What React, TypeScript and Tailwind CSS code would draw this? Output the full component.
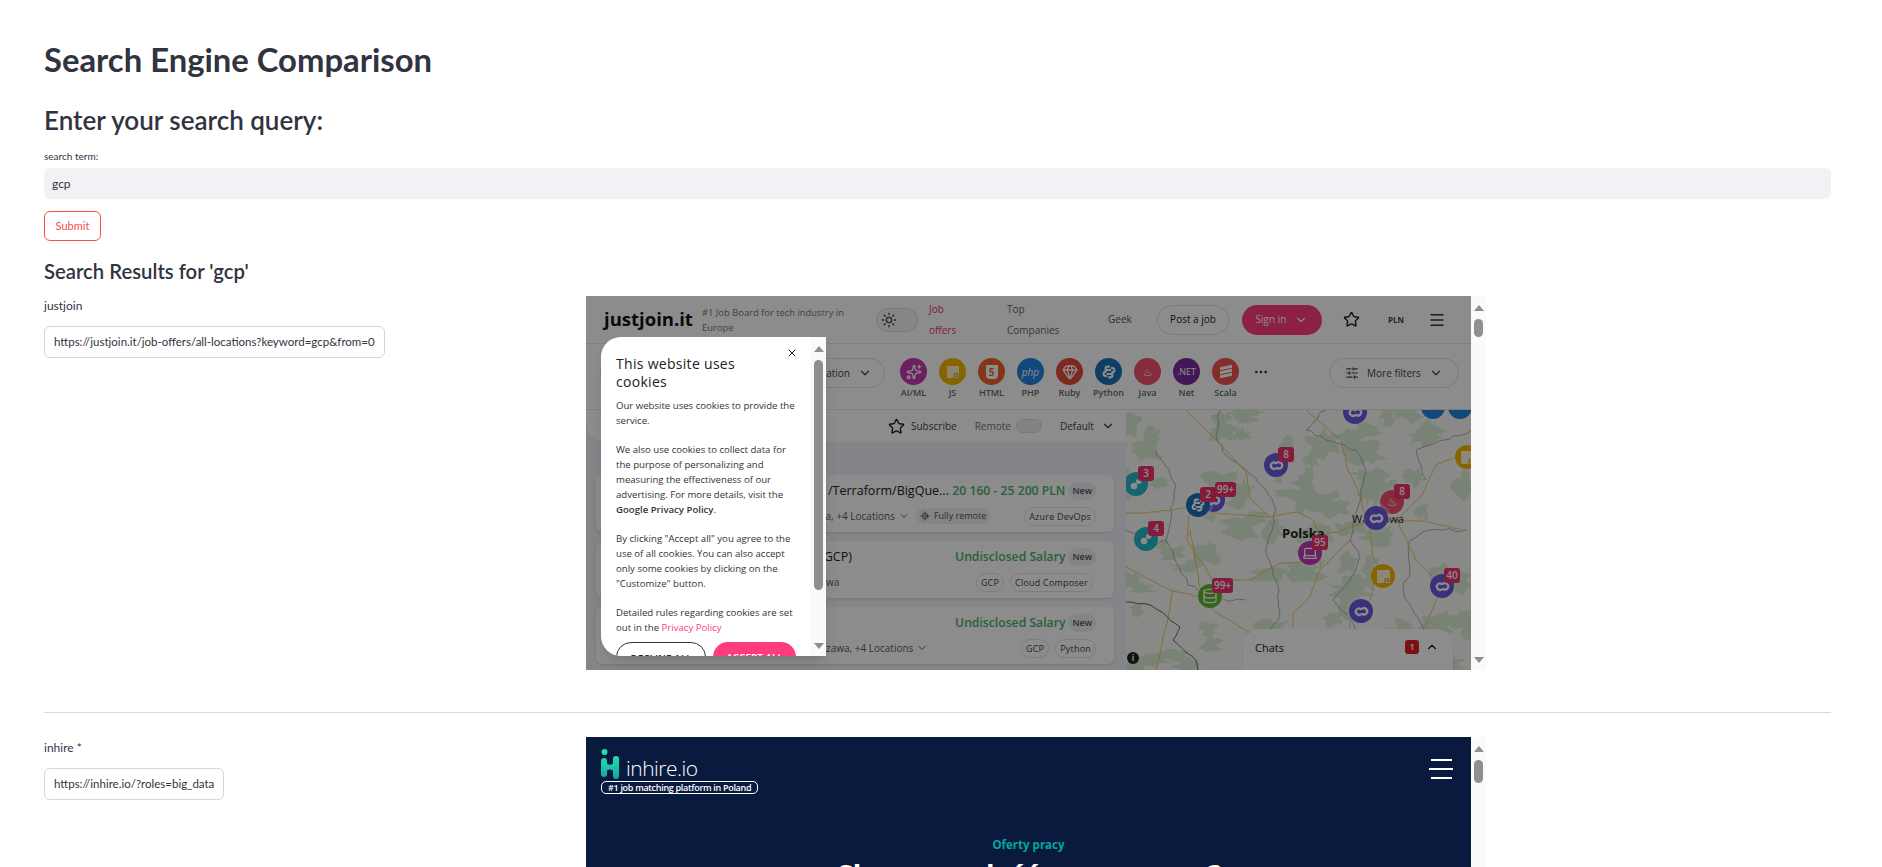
import { ChevronDown, ChevronUp, Database, Ellipsis, Gem, Laptop, LocateFixed, Menu, SlidersHorizontal, Sparkles, Star, Sun, X } from "lucide-react";
import type { ReactNode } from "react";

const TECH: { label: string; bg: string; icon: ReactNode }[] = [
  { label: "AI/ML", bg: "bg-[#c23bb4]", icon: <Sparkles className="h-4 w-4 text-white" /> },
  { label: "JS", bg: "bg-[#f5b800]", icon: <span className="flex h-3 w-3 items-end justify-end bg-[#fff2c0] text-[6px] font-bold leading-none text-[#c59400]">JS</span> },
  { label: "HTML", bg: "bg-[#f0652a]", icon: <span className="flex h-[14px] w-3 items-center justify-center rounded-b-[4px] bg-white text-[10px] font-bold leading-none text-[#f0652a]">5</span> },
  { label: "PHP", bg: "bg-[#2383e2]", icon: <span className="text-[10px] italic leading-none text-white">php</span> },
  { label: "Ruby", bg: "bg-[#e84a3a]", icon: <Gem className="h-4 w-4 text-white" /> },
  { label: "Python", bg: "bg-[#1d6fbb]", icon: <PythonIcon /> },
  { label: "Java", bg: "bg-[#f0506e]", icon: <span className="text-[11px] leading-none text-white">♨</span> },
  { label: "Net", bg: "bg-[#7b2d9f]", icon: <span className="text-[9px] leading-none text-white">.NET</span> },
  { label: "Scala", bg: "bg-[#f0544f]", icon: <span className="flex -skew-y-12 flex-col gap-[1px]"><span className="block h-[3px] w-3 bg-white" /><span className="block h-[3px] w-3 bg-white" /><span className="block h-[3px] w-3 bg-white" /></span> },
];

type Pin = { x: number; y: number; color: string; kind: string; badge?: string };

// page coordinates minus the map's corner (1126, 410)
const PINS: Pin[] = [
  { x: 10, y: 74, color: "#27b9c9", kind: "gear", badge: "3" },
  { x: 20, y: 129, color: "#27b9c9", kind: "gear", badge: "4" },
  { x: 87, y: 90, color: "#6a5ae0", kind: "loop", badge: "99+" },
  { x: 72, y: 95, color: "#1d6fbb", kind: "python", badge: "2" },
  { x: 150, y: 55, color: "#6a5ae0", kind: "loop", badge: "8" },
  { x: 229, y: 2, color: "#6a5ae0", kind: "loop" },
  { x: 307, y: -3, color: "#2383e2", kind: "none" },
  { x: 334, y: -3, color: "#2383e2", kind: "none" },
  { x: 341, y: 47, color: "#f5b800", kind: "js" },
  { x: 184, y: 143, color: "#c23bb4", kind: "laptop", badge: "95" },
  { x: 266, y: 92, color: "#f0506e", kind: "java", badge: "8" },
  { x: 250, y: 108, color: "#6a5ae0", kind: "loop" },
  { x: 257, y: 166, color: "#f5b800", kind: "js" },
  { x: 316, y: 176, color: "#6a5ae0", kind: "loop", badge: "40" },
  { x: 235, y: 201, color: "#6a5ae0", kind: "loop" },
  { x: 84, y: 186, color: "#5fb82e", kind: "db", badge: "99+" },
];

const ROADS = [
  [[87, 103], [144, 107], [171, 102], [187, 110], [194, 125], [217, 120], [237, 113], [271, 110], [302, 112], [337, 120]],
  [[244, 123], [247, 147], [252, 157], [244, 190], [224, 213], [218, 260]],
  [[194, 160], [224, 130]],
  [[194, 125], [194, 160], [184, 187], [167, 203], [167, 217]],
  [[64, 100], [61, 130], [74, 150], [87, 170], [124, 170], [154, 153], [184, 153]],
  [[87, 200], [124, 223], [144, 233]],
  [[0, 103], [20, 103], [60, 98], [87, 103]],
  [[64, 120], [74, 177], [87, 200]],
  [[0, 157], [44, 180], [74, 187]],
  [[47, 180], [40, 217], [30, 260]],
  [[180, 0], [215, 30], [222, 60], [232, 80], [244, 123]],
  [[271, 110], [290, 150], [316, 176]],
  [[316, 176], [300, 215], [296, 240]],
  [[60, 0], [90, 30], [120, 62], [124, 88], [144, 107]],
  [[345, 40], [310, 55], [296, 85], [271, 110]],
];

const BORDERS = [
  [[94, 0], [90, 25], [100, 45], [120, 60], [140, 80], [150, 100], [140, 143], [150, 170], [154, 203], [140, 230]],
  [[200, 0], [180, 20], [200, 30], [230, 40], [240, 60], [235, 85], [224, 130], [234, 147], [224, 170], [207, 190], [227, 213], [235, 250]],
  [[300, 70], [290, 40], [345, 20]],
  [[284, 130], [304, 120], [340, 120]],
  [[284, 130], [284, 160], [277, 180], [297, 217], [300, 260]],
  [[30, 40], [50, 75], [40, 130], [62, 175], [90, 190], [120, 190]],
  [[0, 120], [30, 135], [40, 130]],
];

// fixed seed, so the map comes out the same on every load
function makeRandom(seed: number) {
  let value = seed;
  return () => {
    value = (value * 16807) % 2147483647;
    return value / 2147483647;
  };
}

function wiggle(points: number[][], amp: number, seed: number) {
  const random = makeRandom(seed);
  let d = `M${points[0][0]} ${points[0][1]}`;
  for (let i = 1; i < points.length; i++) {
    const [x0, y0] = points[i - 1];
    const [x1, y1] = points[i];
    const steps = Math.max(1, Math.round(Math.hypot(x1 - x0, y1 - y0) / 6));
    for (let s = 1; s <= steps; s++) {
      const t = s / steps;
      const ox = s === steps ? 0 : (random() - 0.5) * amp;
      const oy = s === steps ? 0 : (random() - 0.5) * amp;
      d += `L${(x0 + (x1 - x0) * t + ox).toFixed(1)} ${(y0 + (y1 - y0) * t + oy).toFixed(1)}`;
    }
  }
  return d;
}

function blob(cx: number, cy: number, rx: number, ry: number, seed: number) {
  const random = makeRandom(seed);
  let d = "";
  const count = 16;
  for (let i = 0; i < count; i++) {
    const angle = (i / count) * Math.PI * 2;
    const r = 0.45 + random() * 0.75;
    d += `${i === 0 ? "M" : "L"}${(cx + Math.cos(angle) * rx * r).toFixed(1)} ${(cy + Math.sin(angle) * ry * r).toFixed(1)}`;
  }
  return d + "Z";
}

const GREEN = (() => {
  const random = makeRandom(4242);
  const shapes: string[] = [];
  for (let i = 0; i < 90; i++) {
    const x = random() * 345;
    const y = random() * 260;
    shapes.push(blob(x, y, 7 + random() * 17, 5 + random() * 11, 100 + i * 37));
  }
  return shapes;
})();

function PythonIcon() {
  return (
    <svg viewBox="0 0 24 24" className="h-4 w-4" fill="none" stroke="white" strokeWidth="3.2" strokeLinecap="round">
      <path d="M12 4H9a2 2 0 0 0-2 2v3h7M7 12H6a2 2 0 0 0-2 2v1a3 3 0 0 0 3 3h1" />
      <path d="M12 20h3a2 2 0 0 0 2-2v-3h-7M17 12h1a2 2 0 0 0 2-2V9a3 3 0 0 0-3-3h-1" />
    </svg>
  );
}

function PinIcon({ kind }: { kind: string }) {
  if (kind === "loop")
    return (
      <svg viewBox="0 0 24 24" className="h-[17px] w-[17px]" fill="none" stroke="white" strokeWidth="3.2" strokeLinecap="round">
        <path d="M11 8.500A4.500 4.500 0 1 0 11 16" />
        <path d="M13 8a4.500 4.500 0 1 1 0 7.500" />
      </svg>
    );
  if (kind === "gear")
    return (
      <svg viewBox="0 0 24 24" className="h-4 w-4" fill="white">
        <circle cx="9" cy="15" r="5" />
        <circle cx="16" cy="8" r="4" />
      </svg>
    );
  if (kind === "python") return <PythonIcon />;
  if (kind === "laptop") return <Laptop className="h-4 w-4 text-white" />;
  if (kind === "db") return <Database className="h-4 w-4 text-white" />;
  if (kind === "java") return <span className="text-[12px] leading-none text-white">♨</span>;
  if (kind === "js")
    return <span className="flex h-[13px] w-[13px] items-end justify-end bg-[#fff6d8] text-[6px] font-bold leading-none text-[#c59400]">JS</span>;
  return null;
}

function MapPin({ pin }: { pin: Pin }) {
  return (
    <div className="absolute h-0 w-0" style={{ left: pin.x, top: pin.y }}>
      <div
        className="absolute -left-3 -top-3 flex h-6 w-6 items-center justify-center rounded-full ring-[3px] ring-white/30"
        style={{ backgroundColor: pin.color }}
      >
        <PinIcon kind={pin.kind} />
      </div>
      {pin.badge && (
        <span className="absolute left-[2px] top-[-18px] h-[15px] min-w-[16px] rounded-[3px] bg-[#f0326f] px-[2px] text-center text-[10px] font-semibold leading-[15px] text-white">
          {pin.badge}
        </span>
      )}
    </div>
  );
}

function MapBackground() {
  return (
    <svg viewBox="0 0 345 260" className="block h-full w-full" fill="none">
      <g fill="#dcefd6">
        {GREEN.map((d) => (
          <path key={d} d={d} />
        ))}
      </g>
      <g stroke="#8f8f9c" strokeWidth="0.7">
        {BORDERS.map((line, i) => (
          <path key={i} d={wiggle(line, 3.5, 50 + i * 11)} />
        ))}
      </g>
      <g stroke="#efc663" strokeWidth="1">
        {ROADS.map((line, i) => (
          <path key={i} d={wiggle(line, 1, 900 + i * 13)} />
        ))}
      </g>
      <path d={wiggle([[0, 192], [26, 196], [54, 217], [47, 230], [70, 250], [72, 260]], 3, 777)} stroke="#55555f" strokeWidth="0.9" />
    </svg>
  );
}

function Pill({ children, className = "" }: { children: ReactNode; className?: string }) {
  return <span className={`whitespace-nowrap rounded-full border border-[#e4e4e8] px-[4px] py-[3px] text-[9px] font-medium leading-[11px] tracking-[0.2px] text-[#37474f] ${className}`}>{children}</span>;
}

function JobCard({ title, salary, location, tags, indent }: { title: string; salary: string; location: string; tags: ReactNode; indent: string }) {
  return (
    <div className="flex h-[57px] flex-col justify-center gap-[7px] rounded-md bg-white pr-[18px] shadow-sm">
      <div className={`flex items-center justify-end gap-[3px] ${indent}`}>
        <span className="mr-auto whitespace-nowrap text-[12.5px] font-medium leading-[18px] text-[#222]">{title}</span>
        <span className="whitespace-nowrap text-[12.2px] font-semibold leading-[18px] text-[#4caf6e]">{salary}</span>
        <span className="rounded-full bg-[#eef0f3] px-[4px] py-[3px] text-[9px] font-semibold leading-[12px] text-[#4a5560]">New</span>
      </div>
      <div className="flex items-center justify-end gap-[6px] pl-[230px]">
        <span className="mr-auto flex items-center gap-[3px] whitespace-nowrap text-[10px] leading-[14px] text-[#555e68]">
          {location}
          {location.includes("Locations") && <ChevronDown className="h-3 w-3" />}
        </span>
        {tags}
      </div>
    </div>
  );
}

function JustJoinFrame() {
  return (
    <div className="relative flex h-full w-[885px] shrink-0 flex-col overflow-hidden bg-white">
      <header className="flex h-[48px] shrink-0 items-center border-b border-[#e8e8ea] pl-[18px]">
        <span className="w-[98px] text-[18.500px] font-bold leading-none text-[#111]">justjoin.it</span>
        <span className="w-[174px] text-[9.4px] leading-[15px] text-[#777]">#1 Job Board for tech industry in<br />Europe</span>
        <span className="flex h-6 w-[42px] items-center rounded-full border border-[#ddd] bg-[#f5f5f7] pl-1">
          <Sun className="h-4 w-4 text-[#444]" />
        </span>
        <span className="ml-[11px] w-[78px] text-[10px] font-medium leading-[21px] text-[#f0326f]">Job<br />offers</span>
        <span className="w-[101px] text-[10px] leading-[21px] text-[#666]">Top<br />Companies</span>
        <span className="w-[49px] text-[10px] text-[#555]">Geek</span>
        <span className="flex h-[30px] w-[72px] items-center justify-center rounded-full border border-[#e0e0e0] text-[10px] font-medium text-[#222]">Post a job</span>
        <span className="ml-[13px] flex h-[30px] w-[80px] items-center justify-center gap-2 rounded-full bg-[#ff3b7f] text-[10px] font-medium text-white">
          Sign in <ChevronDown className="h-3.5 w-3.5" />
        </span>
        <Star className="ml-[21px] h-[17px] w-[17px] text-[#222]" />
        <span className="ml-[28px] text-[8px] font-bold text-[#444]">PLN</span>
        <Menu className="ml-[24px] h-[18px] w-[18px] text-[#333]" />
      </header>

      <div className="flex h-[66px] shrink-0 items-start border-b border-[#e8e8ea] pl-[14px] pt-[14px]">
        <span className="flex h-[30px] w-[285px] items-center justify-end gap-2 rounded-full border border-[#e0e0e0] pr-3 text-[10px] font-medium text-[#37474f]">
          Location <ChevronDown className="h-3.5 w-3.5" />
        </span>
        <div className="ml-[9px] flex">
          {TECH.map((tech) => (
            <div key={tech.label} className="flex w-[39px] flex-col items-center gap-[2px]">
              <span className={`flex h-[27px] w-[27px] items-center justify-center rounded-full ${tech.bg}`}>{tech.icon}</span>
              <span className="text-[9px] font-semibold leading-[12px] text-[#666]">{tech.label}</span>
            </div>
          ))}
        </div>
        <Ellipsis className="ml-[8px] mt-[6px] h-[16px] w-[16px] text-[#333]" />
        <span className="ml-[60px] flex h-[30px] w-[130px] items-center justify-center gap-2 rounded-full border border-[#e0e0e0] text-[10px] font-medium text-[#37474f]">
          <SlidersHorizontal className="h-3.5 w-3.5" /> More filters <ChevronDown className="h-3.5 w-3.5" />
        </span>
      </div>

      <div className="flex min-h-0 flex-1">
        <div className="flex w-[540px] shrink-0 flex-col bg-[#f1f3f7]">
          <div className="flex h-[32px] shrink-0 items-center rounded-bl-[20px] bg-white pl-[302px] text-[10px] font-medium text-[#555]">
            <Star className="h-[17px] w-[17px] text-[#222]" />
            <span className="ml-[6px] text-[#37474f]">Subscribe</span>
            <span className="ml-[18px] text-[#777]">Remote</span>
            <span className="ml-[5px] h-[14px] w-[26px] rounded-full border border-[#ddd] bg-[#eee]" />
            <span className="ml-[18px] text-[#37474f]">Default</span>
            <ChevronDown className="ml-[7px] h-3.5 w-3.5 text-[#333]" />
          </div>
          <div className="flex flex-col gap-[9px] pl-[10px] pr-[12px] pt-[33px]">
            <JobCard
              title="/Terraform/BigQue..."
              salary="20 160 - 25 200 PLN"
              location="wa, +4 Locations"
              indent="pl-[232px]"
              tags={
                <>
                  <span className="mr-[28px] flex items-center gap-1 whitespace-nowrap rounded-full bg-[#eef0f3] px-[4px] py-[2px] text-[9px] font-medium leading-[12px] text-[#555]"><LocateFixed className="h-2.5 w-2.5" />Fully remote</span>
                  <Pill>Azure DevOps</Pill>
                </>
              }
            />
            <JobCard
              title="(GCP)"
              salary="Undisclosed Salary"
              location="wa"
              indent="pl-[224px]"
              tags={<><Pill>GCP</Pill><Pill className="mr-[3px]">Cloud Composer</Pill></>}
            />
            <JobCard
              title=""
              salary="Undisclosed Salary"
              location="zawa, +4 Locations"
              indent="pl-[230px]"
              tags={<><Pill>GCP</Pill><Pill>Python</Pill></>}
            />
          </div>
        </div>
        <div className="relative min-w-0 flex-1 overflow-hidden bg-[#fafbf7]">
          <MapBackground />
          <span className="absolute left-[156px] top-[114px] text-[13px] font-bold leading-[18px] text-[#222]">Polska</span>
          <span className="absolute left-[226px] top-[102px] text-[11px] font-medium leading-[14px] text-[#222]">Warszawa</span>
          {PINS.map((pin) => (
            <MapPin key={`${pin.x}-${pin.y}`} pin={pin} />
          ))}
          <span className="absolute bottom-[6px] left-[1px] flex h-3 w-3 items-center justify-center rounded-full bg-[#222] text-[8px] font-bold text-white">i</span>
          <div className="absolute bottom-0 left-[117px] flex h-[41px] w-[210px] items-start rounded-t-2xl bg-white pl-3 pr-[14px] pt-[11px] text-[11px] text-[#222] shadow">
            Chats
            <span className="ml-auto mr-[6px] flex h-[14px] w-[14px] items-center justify-center rounded-[3px] bg-[#e02020] text-[9px] font-semibold text-white">1</span>
            <ChevronUp className="h-3.5 w-3.5" />
          </div>
        </div>
      </div>

      {/* the page dims itself behind the cookie dialog */}
      <div className="absolute inset-0 bg-black/[0.45]" />
      <div className="absolute left-[15px] top-[41px] flex h-[319px] w-[225px] overflow-hidden rounded-l-[20px] bg-white shadow-lg">
        <div className="relative w-[210px] shrink-0 pl-[15px] pt-[18px] text-[9.6px] leading-[15px] text-[#333]">
          <X className="absolute right-[13px] top-[10px] h-3 w-3 text-[#222]" />
          <h4 className="w-[170px] text-[14px] font-normal leading-[18px] tracking-[0.3px] text-[#222]">This website uses cookies</h4>
          <p className="mt-[7px] w-[182px]">Our website uses cookies to provide the service.</p>
          <p className="mt-[14px] w-[182px]">We also use cookies to collect data for the purpose of personalizing and measuring the effectiveness of our advertising. For more details, visit the <b className="font-semibold">Google Privacy Policy</b>.</p>
          <p className="mt-[14px] w-[182px]">By clicking "Accept all" you agree to the use of all cookies. You can also accept only some cookies by clicking on the "Customize" button.</p>
          <p className="mt-[14px] w-[182px]">Detailed rules regarding cookies are set out in the <span className="text-[#ff3b7f]">Privacy Policy</span></p>
          <div className="mt-[7px] flex gap-[7px] text-[10px] font-semibold">
            <span className="flex h-[30px] w-[90px] items-start justify-center rounded-full border border-[#333] pt-[9px] text-[#222]">DECLINE ALL</span>
            <span className="flex h-[30px] w-[83px] items-start justify-center rounded-full bg-[#ff3b7f] pt-[9px] text-white">ACCEPT ALL</span>
          </div>
        </div>
        <Scrollbar thumbTop="mt-[8px]" thumbH="h-[230px]" />
      </div>
    </div>
  );
}

function Scrollbar({ thumbTop, thumbH }: { thumbTop: string; thumbH: string }) {
  return (
    <div className="flex h-full w-[15px] shrink-0 flex-col items-center bg-[#fafafa] pt-[9px]">
      <span className="h-0 w-0 border-x-[5px] border-b-[6px] border-x-transparent border-b-[#8f8f8f]" />
      <span className={`w-[9px] rounded-full bg-[#8f8f8f] ${thumbTop} ${thumbH}`} />
      <span className="mt-auto mb-[7px] h-0 w-0 border-x-[5px] border-t-[6px] border-x-transparent border-t-[#8f8f8f]" />
    </div>
  );
}

function InhireFrame() {
  return (
    <div className="flex h-[374px] w-[900px] shrink-0">
      <div className="relative flex w-[885px] shrink-0 flex-col items-center bg-[#0a1a3f] text-white">
        <div className="flex w-full items-start justify-between pl-[15px] pr-[18px] pt-[12px]">
          <div className="flex flex-col items-start">
            <div className="flex items-end gap-[7px]">
              <svg viewBox="0 0 18 31" className="h-[31px] w-[18px]">
                <defs>
                  <linearGradient id="inhire-mark" x1="0" y1="0" x2="0" y2="1">
                    <stop offset="0" stopColor="#22e0a8" />
                    <stop offset="1" stopColor="#12a5a5" />
                  </linearGradient>
                </defs>
                <circle cx="3.500" cy="3" r="3" fill="#22e0a8" />
                <path d="M0 12a3 3 0 0 1 6 0v2.500q3 2.500 6 0V10a3 3 0 0 1 6 0v17a3 3 0 0 1-6 0v-5.500q-3-2-6 0V25a3 3 0 0 1-6 0Z" fill="url(#inhire-mark)" />
              </svg>
              <span className="text-[21px] font-light leading-[24px] tracking-[-0.5px]">inhire.io</span>
            </div>
            <span className="mt-[1px] whitespace-nowrap rounded-[5px] border border-white px-[6px] text-[9px] font-semibold leading-[11px] tracking-[-0.3px]">#1 job matching platform in Poland</span>
          </div>
          <div className="mt-[10px] flex w-[24px] flex-col items-center gap-[7px]">
            <span className="block h-[2px] w-[21px] bg-white" />
            <span className="block h-[2px] w-[24px] bg-white" />
            <span className="block h-[2px] w-[21px] bg-white" />
          </div>
        </div>
        <p className="mt-[44px] text-[11.5px] font-bold leading-[14px] text-[#00a99d]">Oferty pracy</p>
        <p className="mt-[5px] text-[28px] font-bold leading-[36px]">Chcesz znaleźć nową pracę?</p>
      </div>
      <Scrollbar thumbTop="mt-[8px]" thumbH="h-[23px]" />
    </div>
  );
}

function LinkButton({ children }: { children: ReactNode }) {
  return (
    <span className="mt-[11px] block w-fit rounded-md border border-[#d5d6da] px-[9px] py-[7px] text-[11.500px] leading-[16px] text-[#31333f]">
      {children}
    </span>
  );
}

export default function App() {
  return (
    <div className="h-[867px] overflow-hidden bg-white pl-[44px] pr-[51px] pt-[42px] font-['Open_Sans','Noto_Sans',sans-serif] text-[#31333f]">
      <div className="font-['Lato','Noto_Sans',sans-serif]">
        <h1 className="text-[32.800px] font-bold leading-[36px]">Search Engine Comparison</h1>
        <h2 className="mt-[27px] text-[26px] font-semibold leading-[30px]">Enter your search query:</h2>
        <label className="mt-[14px] block text-[10px] leading-[14px]">search term:</label>
        <div className="mt-[5px] h-[31px] rounded-md bg-[#f0f2f6] pl-[8px] text-[12px] leading-[31px]">gcp</div>
        <button className="mt-[12px] block h-[30px] w-[57px] rounded-md border border-[#ff4b4b] text-[11px] text-[#ff4b4b]">Submit</button>
        <h3 className="mt-[17px] text-[20.300px] font-semibold leading-[26px]">Search Results for 'gcp'</h3>
      </div>

      <section className="mt-[12px] flex">
        <div className="w-[542px] shrink-0 pt-[1px] font-['Lato','Noto_Sans',sans-serif]">
          <p className="text-[12px] leading-[18px]">justjoin</p>
          <LinkButton>https://justjoin.it/job-offers/all-locations?keyword=gcp&amp;from=0</LinkButton>
        </div>
        <div className="flex h-[374px] w-[900px] shrink-0">
          <JustJoinFrame />
          <Scrollbar thumbTop="mt-[8px]" thumbH="h-[18px]" />
        </div>
      </section>

      <hr className="mt-[42px] border-t border-[#d9d9dc]" />

      <section className="mt-[24px] flex">
        <div className="w-[542px] shrink-0 pt-[2px] font-['Lato','Noto_Sans',sans-serif]">
          <p className="text-[12px] leading-[18px]">inhire *</p>
          <LinkButton>https://inhire.io/?roles=big_data</LinkButton>
        </div>
        <InhireFrame />
      </section>
    </div>
  );
}
